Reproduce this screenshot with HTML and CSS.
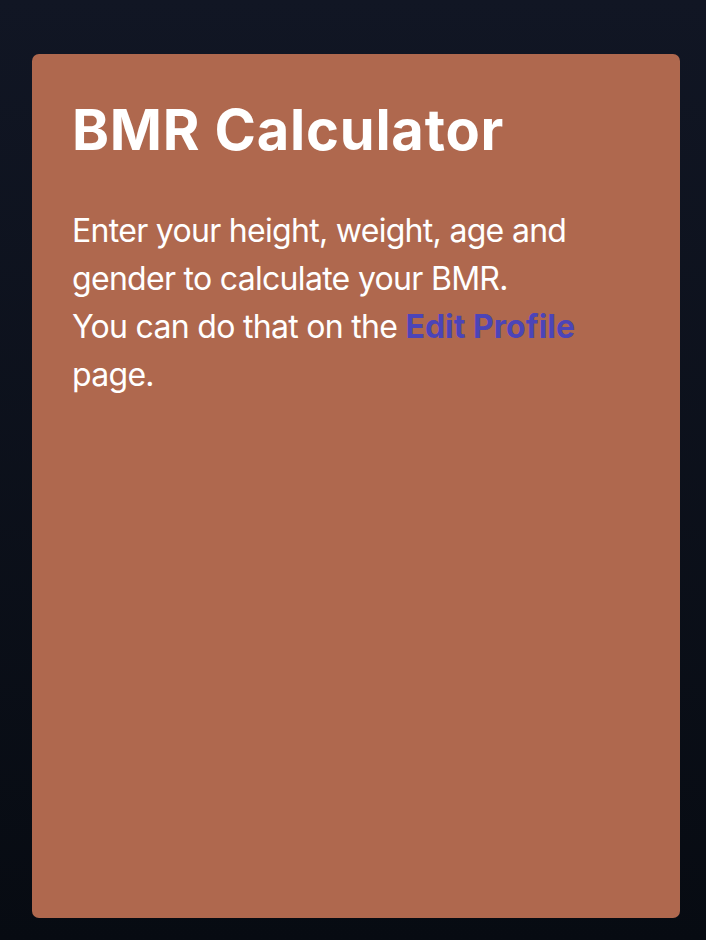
FILE: index.html
```html
<!DOCTYPE html>
<html lang="en">
<head>
<meta charset="utf-8">
<title>BMR Calculator</title>
<link rel="stylesheet" href="styles.css">
</head>
<body>
<main class="page">
  <section class="card">
    <h1 class="card-title">BMR Calculator</h1>
    <p class="card-text">Enter your height, weight, age and gender to calculate your BMR.<br>You can do that on the <a class="card-link" href="#">Edit Profile</a> page.</p>
  </section>
</main>
</body>
</html>
```
FILE: styles.css
```css
html, body {
  margin: 0;
  padding: 0;
  height: 100%;
}
body {
  background: linear-gradient(180deg, #111624 0%, #070b12 100%);
  font-family: Inter, "Noto Sans", sans-serif;
  color: #ffffff;
}
.page {
  box-sizing: border-box;
  height: 100%;
  padding: 54px 26px 22px 32px;
  display: flex;
}
.card {
  flex: 1;
  background: #af684e;
  border-radius: 7px;
  padding: 42px 40px 40px;
}
.card-title {
  margin: 0;
  font-size: 56px;
  line-height: 68px;
  font-weight: 700;
  letter-spacing: 0.8px;
}
.card-text {
  margin: 43px 0 0;
  font-size: 32px;
  line-height: 48px;
  font-weight: 400;
  letter-spacing: -0.7px;
}
.card-link {
  color: #4c44b8;
  font-weight: 700;
  letter-spacing: 0;
  text-decoration: none;
}
```
